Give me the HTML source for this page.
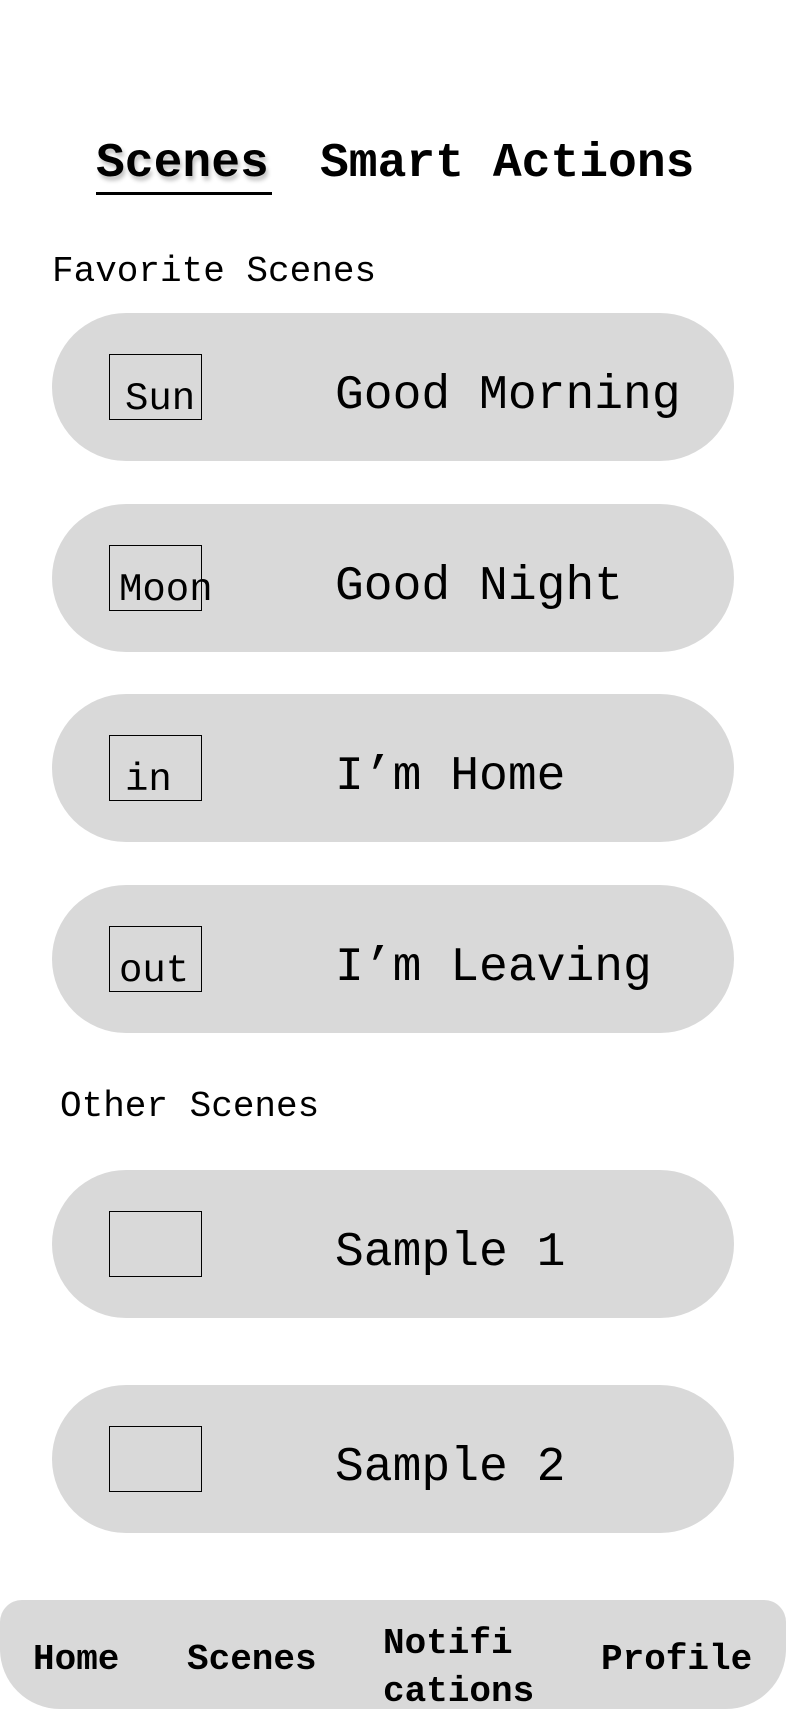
<!DOCTYPE html>
<html><head><meta charset="utf-8"><style>
*{margin:0;padding:0;box-sizing:border-box}
body{width:786px;height:1704px;background:#fff;position:relative;overflow:hidden;font-family:"Liberation Mono",monospace;color:#000}
.a{position:absolute;white-space:nowrap;line-height:1}
.card{position:absolute;left:52px;width:682px;height:148px;background:#d9d9d9;border-radius:74px}
.box{position:absolute;left:57px;top:41px;width:93px;height:66px;border:1.5px solid #000}
.box span{position:absolute;bottom:0px;font-size:39px;line-height:1}
.t{position:absolute;left:283px;top:9px;height:148px;line-height:148px;font-size:48px}
.nav{position:absolute;left:0;top:1600px;width:786px;height:109px;background:#d9d9d9;border-radius:22px 22px 60px 60px}
.n{position:absolute;font-weight:bold;font-size:36px;line-height:1}
</style></head><body>
<div class="a" style="left:96px;top:140px;font-size:48px;font-weight:bold;text-shadow:2px 4px 4px rgba(0,0,0,.25)">Scenes</div>
<div style="position:absolute;left:96px;top:192px;width:176px;height:3px;background:#000"></div>
<div class="a" style="left:320px;top:140px;font-size:48px;font-weight:bold">Smart Actions</div>
<div class="a" style="left:52px;top:254px;font-size:36px">Favorite Scenes</div>
<div class="card" style="top:313px"><div class="box"><span style="left:15px">Sun</span></div><div class="t">Good Morning</div></div>
<div class="card" style="top:504px"><div class="box"><span style="left:9px">Moon</span></div><div class="t">Good Night</div></div>
<div class="card" style="top:694px"><div class="box"><span style="left:15px">in</span></div><div class="t">I’m Home</div></div>
<div class="card" style="top:885px"><div class="box"><span style="left:9px">out</span></div><div class="t">I’m Leaving</div></div>
<div class="a" style="left:60px;top:1089px;font-size:36px">Other Scenes</div>
<div class="card" style="top:1170px"><div class="box"></div><div class="t">Sample 1</div></div>
<div class="card" style="top:1385px"><div class="box"></div><div class="t">Sample 2</div></div>
<div class="nav">
<div class="n" style="left:33px;top:42px">Home</div>
<div class="n" style="left:187px;top:42px">Scenes</div>
<div class="n" style="left:383px;top:20px;line-height:48px">Notifi<br>cations</div>
<div class="n" style="left:601px;top:42px">Profile</div>
</div>
</body></html>
